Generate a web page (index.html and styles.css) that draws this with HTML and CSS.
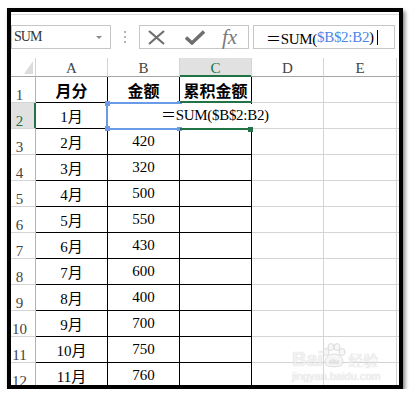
FILE: index.html
```html
<!DOCTYPE html>
<html lang="zh-CN">
<head>
  <meta charset="UTF-8">
  <meta name="viewport" content="width=device-width, initial-scale=1">
  <link rel="stylesheet" href="styles.css">
</head>
<body>

  <div class="frame">
    <div class="edge"></div>

    <div class="formula-bar">
      <div class="name-box"><span>SUM</span><span class="drop"></span></div>
      <div class="grip"><i></i><i></i><i></i></div>
      <div class="fx-box">
        <svg class="ico-x" width="17" height="15" viewBox="0 0 17 15">
          <path d="M1 1 L16 14 M16 1 L1 14" stroke="#6e6e6e" stroke-width="2.2" fill="none"/>
        </svg>
        <svg class="ico-ok" width="20" height="15" viewBox="0 0 20 15">
          <path d="M1 7.5 L7 13 L19 1.5" stroke="#6e6e6e" stroke-width="3.4" fill="none"/>
        </svg>
        <span class="fx">fx</span>
      </div>
      <div class="input-box">＝SUM(<span class="ref">$B$2:B2</span>)<span class="caret"></span></div>
    </div>

    <div class="sheet">
      <!-- column headers -->
      <div class="ch corner">
        <svg width="9" height="13" viewBox="0 0 9 13"><polygon points="9,0 9,13 0,13" fill="#dcdcdc"/></svg>
      </div>
      <div class="ch">A</div>
      <div class="ch">B</div>
      <div class="ch on">C</div>
      <div class="ch">D</div>
      <div class="ch">E</div>
      <div class="ch last"></div>

      <!-- 1 -->
      <div class="rh">1</div>
      <div class="c t hd">月分</div>
      <div class="c t hd">金额</div>
      <div class="c t hd">累积金额</div>
      <div class="c"></div><div class="c"></div><div class="c last"></div>

      <!-- 2 -->
      <div class="rh on">2</div>
      <div class="c t">1月</div>
      <div class="c t">
        <div class="ref-box"><i class="k tl"></i><i class="k tr"></i><i class="k bl"></i><i class="k br"></i></div>
        <div class="editor">＝SUM($B$2:B2)</div>
      </div>
      <div class="c t"><div class="active"><i class="handle"></i></div></div>
      <div class="c"></div><div class="c"></div><div class="c last"></div>

      <!-- 3 -->
      <div class="rh">3</div>
      <div class="c t">2月</div><div class="c t">420</div><div class="c t"></div>
      <div class="c"></div><div class="c"></div><div class="c last"></div>

      <!-- 4 -->
      <div class="rh">4</div>
      <div class="c t">3月</div><div class="c t">320</div><div class="c t"></div>
      <div class="c"></div><div class="c"></div><div class="c last"></div>

      <!-- 5 -->
      <div class="rh">5</div>
      <div class="c t">4月</div><div class="c t">500</div><div class="c t"></div>
      <div class="c"></div><div class="c"></div><div class="c last"></div>

      <!-- 6 -->
      <div class="rh">6</div>
      <div class="c t">5月</div><div class="c t">550</div><div class="c t"></div>
      <div class="c"></div><div class="c"></div><div class="c last"></div>

      <!-- 7 -->
      <div class="rh">7</div>
      <div class="c t">6月</div><div class="c t">430</div><div class="c t"></div>
      <div class="c"></div><div class="c"></div><div class="c last"></div>

      <!-- 8 -->
      <div class="rh">8</div>
      <div class="c t">7月</div><div class="c t">600</div><div class="c t"></div>
      <div class="c"></div><div class="c"></div><div class="c last"></div>

      <!-- 9 -->
      <div class="rh">9</div>
      <div class="c t">8月</div><div class="c t">400</div><div class="c t"></div>
      <div class="c"></div><div class="c"></div><div class="c last"></div>

      <!-- 10 -->
      <div class="rh">10</div>
      <div class="c t">9月</div><div class="c t">700</div><div class="c t"></div>
      <div class="c"></div><div class="c"></div><div class="c last"></div>

      <!-- 11 -->
      <div class="rh">11</div>
      <div class="c t">10月</div><div class="c t">750</div><div class="c t"></div>
      <div class="c"></div><div class="c"></div><div class="c last"></div>

      <!-- 12 -->
      <div class="rh">12</div>
      <div class="c t">11月</div><div class="c t">760</div><div class="c t"></div>
      <div class="c"></div><div class="c"></div><div class="c last"></div>
    </div>

    <div class="watermark">
      <div class="wm-top">
        <span class="wm-bai">Bai</span>
        <svg class="wm-paw" width="26" height="26" viewBox="0 0 26 26">
          <g fill="#f4f4f4" stroke="#d6d6d6" stroke-width="1">
            <ellipse cx="5" cy="9" rx="3" ry="3.5"/>
            <ellipse cx="10" cy="4" rx="3" ry="3.5"/>
            <ellipse cx="16" cy="4" rx="3" ry="3.5"/>
            <ellipse cx="21" cy="9" rx="3" ry="3.5"/>
            <path d="M4 20 C4 13 9 11 13 11 C17 11 22 13 22 20 C22 25 4 25 4 20 Z"/>
          </g>
          <text x="13" y="21" font-size="8" font-family="Liberation Sans, sans-serif" font-weight="bold" fill="#e4e4e4" text-anchor="middle">du</text>
        </svg>
        <span class="wm-jy">经验</span>
      </div>
      <div class="wm-url">jingyan.baidu.com</div>
    </div>
  </div>

</body>
</html>
```

FILE: styles.css
```css
* {
  box-sizing: border-box;
}

body {
  margin: 0;
  background-color: #fff;
  font-family: "Liberation Serif", "Noto Sans CJK SC", serif;
  font-size: 15px;
  color: #000;
}

.frame {
  position: relative;
  width: 396px;
  height: 381px;
  margin: 8px 0 0 7px;
  border: 4px solid #000;
  background-color: #fff;
  overflow: hidden;
  box-shadow: 2px 3px 4px rgba(0,0,0,0.5);
}

.edge {
  height: 3px;
  border-bottom: 1px solid #dadada;
}

/* formula bar */

.formula-bar {
  display: flex;
  align-items: center;
  height: 24px;
  margin-top: 10px;
}

.name-box {
  width: 100px;
  height: 24px;
  border: 1px solid #c6c6c6;
  display: flex;
  align-items: center;
  justify-content: space-between;
  padding: 0 8px 0 2px;
  color: #333;
  font-size: 14px;
  letter-spacing: -1px;
}

.drop {
  width: 0;
  height: 0;
  border-left: 3px solid transparent;
  border-right: 3px solid transparent;
  border-top: 3px solid #8a8a8a;
}

.grip {
  display: flex;
  flex-direction: column;
  gap: 3px;
  margin-left: 13px;
  width: 2px;
}

.grip i {
  display: block;
  width: 2px;
  height: 2px;
  background-color: #b4b4b4;
}

.fx-box {
  display: flex;
  align-items: center;
  width: 110px;
  height: 24px;
  margin-left: 13px;
  padding-left: 8px;
  border: 1px solid #c6c6c6;
}

.ico-ok {
  margin-left: 20px;
}

.fx {
  margin-left: 17px;
  font-family: "Liberation Serif", serif;
  font-style: italic;
  font-size: 21px;
  color: #7a7a7a;
  line-height: 20px;
}

.input-box {
  flex: 1;
  display: flex;
  align-items: center;
  height: 24px;
  margin: 0 4px 0 4px;
  padding-left: 12px;
  border: 1px solid #c6c6c6;
  white-space: nowrap;
  letter-spacing: -0.3px;
}

.ref {
  color: #4a86e8;
}

.caret {
  display: inline-block;
  width: 1px;
  height: 15px;
  margin-left: 3px;
  background-color: #000;
}

/* grid */

.sheet {
  display: grid;
  grid-template-columns: 25px 72px 72px 72px 72px 73px 2px;
  grid-template-rows: 19px;
  grid-auto-rows: 26px;
  margin-top: 9px;
}

.ch {
  border-right: 1px solid #d4d4d4;
  border-bottom: 1px solid #a6a6a6;
  color: #444;
  text-align: center;
  line-height: 18px;
  padding-top: 1px;
}

.ch.on {
  background-color: #e1e1e1;
  color: #217346;
  border-bottom-color: #217346;
  box-shadow: inset 0 -1px 0 #217346;
}

.corner {
  display: flex;
  align-items: flex-end;
  justify-content: flex-end;
  padding: 0 2px 2px 0;
}

.corner svg {
  display: block;
}

.rh {
  display: flex;
  align-items: flex-end;
  justify-content: center;
  padding-right: 7px;
  line-height: 13px;
  border-right: 1px solid #b4b4b4;
  border-bottom: 1px solid #d4d4d4;
  color: #444;
  white-space: nowrap;
}

.rh.on {
  background-color: #e1e1e1;
  color: #217346;
  border-right-color: #217346;
  box-shadow: inset -1px 0 0 #217346;
}

.c {
  position: relative;
  display: flex;
  align-items: center;
  justify-content: center;
  border-right: 1px solid #d4d4d4;
  border-bottom: 1px solid #d4d4d4;
  white-space: nowrap;
}

.c.t {
  border-color: #000;
}

.c.last,
.ch.last {
  border-right: none;
}

.hd {
  font-family: "Noto Sans CJK SC", sans-serif;
  font-weight: bold;
  font-size: 16px;
}

/* selection overlays */

.ref-box {
  position: absolute;
  top: -1px;
  left: -2px;
  right: -2px;
  bottom: -2px;
  border: 2px solid #6a9be8;
  z-index: 2;
}

.ref-box .k {
  position: absolute;
  width: 5px;
  height: 5px;
  background-color: #6a9be8;
}

.k.tl { top: -3px; left: -3px; }
.k.tr { top: -3px; right: -3px; }
.k.bl { bottom: -3px; left: -3px; }
.k.br { bottom: -3px; right: -3px; }

.editor {
  position: absolute;
  top: 1px;
  left: 51px;
  height: 23px;
  padding: 0 3px 0 2px;
  line-height: 23px;
  background-color: #fff;
  letter-spacing: -0.3px;
  z-index: 3;
}

.active {
  position: absolute;
  top: -2px;
  left: 0;
  right: -1px;
  bottom: -2px;
  border-top: 2px solid #217346;
  border-bottom: 2px solid #217346;
  z-index: 2;
}

.handle {
  position: absolute;
  right: -1px;
  bottom: -4px;
  width: 5px;
  height: 5px;
  background-color: #217346;
}

/* watermark */

.watermark {
  position: absolute;
  left: 281px;
  top: 329px;
  width: 92px;
  color: #eeeeee;
  font-family: "Liberation Sans", sans-serif;
  text-shadow: 0 0 1px #c4c4c4;
  opacity: 0.8;
}

.wm-top {
  display: flex;
  align-items: flex-end;
  height: 28px;
}

.wm-bai {
  font-size: 20px;
  font-weight: bold;
  line-height: 20px;
}

.wm-paw {
  display: block;
  margin-left: -2px;
}

.wm-jy {
  font-family: "Noto Sans CJK SC", sans-serif;
  font-size: 15px;
  line-height: 18px;
  margin-left: 1px;
}

.wm-url {
  font-size: 11px;
  line-height: 12px;
  margin-top: 1px;
}
```
